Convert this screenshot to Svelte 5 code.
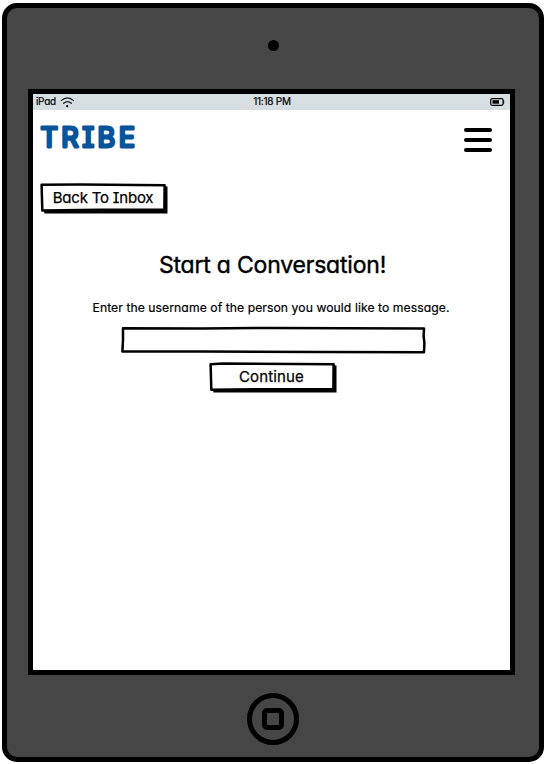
<script>
  let username = $state('');
</script>

<div class="tablet">
  <div class="top"><span class="camera"></span></div>

  <main class="screen">
    <div class="status">
      <div class="carrier">
        <span>iPad</span>
        <svg width="16" height="11" viewBox="0 0 16 11" fill="none" stroke="#161a1b" stroke-width="1.2" stroke-linecap="round">
          <path d="M1.2 3.6Q7.6-1.9 13.6 3.6" />
          <path d="M3.6 6.3Q7.6 2.8 11.4 6.3" />
          <circle cx="7.2" cy="9.2" r="1.1" fill="#000" stroke="none" />
        </svg>
      </div>
      <span class="time">11:18 PM</span>
      <div class="power">
        <svg width="15" height="8" viewBox="0 0 15 8">
          <rect x="0.7" y="0.7" width="12.4" height="6.6" rx="1.5" fill="none" stroke="#000" stroke-width="1.2" />
          <rect x="2.5" y="2.2" width="6.5" height="3.5" fill="#000" />
          <path d="M13.7 2.5v3" stroke="#000" stroke-width="1" />
        </svg>
      </div>
    </div>

    <header>
      <h1>
        <svg width="100" height="40" viewBox="0 0 100 40">
          <text x="0.4" y="29.2" textLength="94.5" lengthAdjust="spacing">TRIBE</text>
        </svg>
      </h1>
      <button class="menu" aria-label="Menu"><i></i><i></i><i></i></button>
    </header>

    <button class="sketch back">
      <svg width="128" height="32" viewBox="0 0 128 32">
        <path d="M4 27.5L124 26.5V3L127.5 3.5V30.4H4.5Z" />
        <path class="face" d="M1.6 1.8L40 1.4L124.6 2.2L124.4 26.6L60 26.8L2.3 27.4L2 16Z" />
      </svg>
      <span>Back To Inbox</span>
    </button>

    <section>
      <h2>Start a Conversation!</h2>
      <p>Enter the username of the person you would like to message.</p>
      <div class="field">
        <svg width="305" height="28" viewBox="0 0 305 28">
          <path class="face" d="M2 2.2L80 2.5L150 2L303 2.6L302.6 10L303.4 17L303 26.2L200 25.9L80 25.6L1.4 25.6L2 14Z" />
        </svg>
        <input bind:value={username} aria-label="Username" />
      </div>
      <button class="sketch continue">
        <svg width="128" height="32" viewBox="0 0 128 32">
          <path d="M4 27.5L124 26.5V3L127.5 3.5V30.6H4.5Z" />
          <path class="face" d="M1.6 2.2L14 1.6L124.6 2.2L124.4 27L60 27.2L2.3 27.8L2 16Z" />
        </svg>
        <span>Continue</span>
      </button>
    </section>
  </main>

  <div class="bottom"><span class="home"><i></i></span></div>
</div>

<style>
  :global(body) {
    background: #fff;
  }
  .tablet {
    box-sizing: border-box;
    width: 542px;
    height: 759px;
    margin: 3px 0 0 2px;
    border: 5px solid #000;
    border-radius: 15px;
    background: #464646;
    display: flex;
    flex-direction: column;
    overflow: hidden;
    color: #000;
    font-family: Inter, 'Liberation Sans', sans-serif;
    font-feature-settings: 'cv11', 'cv08';
  }
  .top {
    height: 81px;
    flex: none;
    display: flex;
    justify-content: center;
  }
  .camera {
    width: 11px;
    height: 11px;
    margin-top: 32px;
    border-radius: 50%;
    background: #000;
  }
  .screen {
    box-sizing: border-box;
    width: 487px;
    height: 586px;
    flex: none;
    margin-left: 21px;
    border: 5px solid #000;
    background: #fff;
    display: flex;
    flex-direction: column;
  }
  .status {
    height: 16px;
    flex: none;
    padding: 0 5px 0 3px;
    display: grid;
    grid-template-columns: 1fr auto 1fr;
    align-items: center;
    background: #d7dee1;
    font-size: 10px;
    line-height: 14px;
    -webkit-text-stroke: 0.2px #000;
  }
  .carrier {
    display: flex;
    align-items: center;
    gap: 4px;
    letter-spacing: -0.3px;
  }
  .carrier span,
  .time {
    padding-bottom: 2px;
  }
  .time {
    padding-left: 3px;
    letter-spacing: -0.25px;
  }
  .power {
    display: flex;
    justify-content: flex-end;
  }
  header {
    height: 65px;
    flex: none;
    padding: 0 18px 0 7px;
    display: flex;
    justify-content: space-between;
    align-items: flex-start;
  }
  h1 {
    margin: 8px 0 0;
    font-size: 27px;
    line-height: 40px;
    font-weight: 400;
  }
  h1 svg {
    display: block;
  }
  h1 text {
    fill: #07549a;
    stroke: #07549a;
    stroke-width: 2.8px;
    stroke-linejoin: round;
  }
  button {
    padding: 0;
    border: 0;
    background: none;
    color: inherit;
    font: inherit;
    font-feature-settings: inherit;
  }
  .menu {
    width: 28px;
    margin-top: 18px;
    display: flex;
    flex-direction: column;
    gap: 6px;
  }
  .menu i {
    height: 4px;
    border-radius: 2px;
    background: #000;
  }
  .sketch,
  .field {
    display: grid;
    flex: none;
  }
  .sketch > *,
  .field > * {
    grid-area: 1 / 1;
  }
  .sketch {
    width: 128px;
    height: 32px;
    font-size: 15px;
    -webkit-text-stroke: 0.25px #000;
  }
  .sketch span {
    line-height: 30px;
    padding-right: 3px;
    white-space: nowrap;
  }
  .back {
    margin: 8px 0 0 7px;
    letter-spacing: -0.2px;
  }
  .back span {
    padding-right: 2px;
  }
  .face {
    fill: #fff;
    stroke: #000;
    stroke-width: 2.5;
    stroke-linejoin: round;
  }
  section {
    display: flex;
    flex-direction: column;
    align-items: center;
    padding-top: 34px;
  }
  h2 {
    margin: 0 0 0 2px;
    font-size: 23px;
    line-height: 32px;
    font-weight: 400;
    letter-spacing: -0.2px;
    -webkit-text-stroke: 0.4px #000;
    white-space: nowrap;
  }
  p {
    margin: 17px 1px 0 0;
    font-size: 12.2px;
    line-height: 20px;
    letter-spacing: 0.06px;
    white-space: nowrap;
    -webkit-text-stroke: 0.2px #000;
  }
  .field {
    margin-top: 8px;
    margin-left: 3px;
  }
  input {
    margin: 3px;
    padding: 0 6px;
    min-width: 0;
    border: 0;
    outline: 0;
    background: none;
    font: 15px Inter, sans-serif;
  }
  .continue {
    margin: 8px 0 0 3px;
    letter-spacing: 0.15px;
  }
  .bottom {
    flex: 1;
    display: flex;
    justify-content: center;
    align-items: flex-start;
  }
  .home {
    box-sizing: border-box;
    width: 52px;
    height: 52px;
    margin-top: 18px;
    border: 5px solid #000;
    border-radius: 50%;
    display: flex;
    align-items: center;
    justify-content: center;
  }
  .home i {
    width: 12px;
    height: 12px;
    border: 5px solid #000;
    border-radius: 5px;
  }
</style>
